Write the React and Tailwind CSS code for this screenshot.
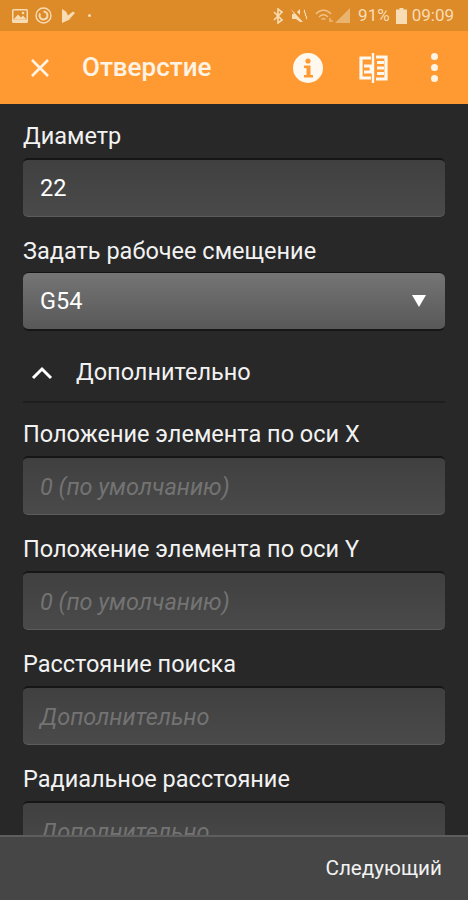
import React from "react";

function Field({ label, value, placeholder, italic }) {
  return (
    <div className="mb-[18px]">
      <div className="h-[32px] text-[23.5px] leading-[32px] text-[#f2f2f2]">{label}</div>
      <div className="mt-[6px] h-[59px] rounded-[5px] border-t-2 border-[#161616] border-b border-b-[#5c5c5c] bg-gradient-to-b from-[#404040] to-[#4a4a4a] px-[17px] flex items-center overflow-hidden">
        {value ? (
          <span className="pt-[2px] text-[23.5px] text-white">{value}</span>
        ) : (
          <span className={`pt-[4px] text-[23.5px] text-[#737373] ${italic ? "italic" : ""}`}>{placeholder}</span>
        )}
      </div>
    </div>
  );
}

function StatusBar() {
  return (
    <div className="h-[31px] bg-[#dd8a28] flex items-center justify-between pl-[12px] pr-[14px] text-[#f8dcb4]">
      <div className="flex items-center gap-[7px]">
        <svg width="16" height="14" viewBox="0 0 16 14">
          <rect x="0" y="0" width="16" height="14" rx="1.5" fill="#f8dcb4" />
          <rect x="1.5" y="1.5" width="13" height="9" fill="#dd8a28" />
          <path d="M1.5 10.5 6 5.5l3 3 2-2 3.5 4z" fill="#f8dcb4" />
          <circle cx="11" cy="4" r="1.3" fill="#f8dcb4" />
        </svg>
        <svg width="17" height="17" viewBox="0 0 17 17" fill="none" stroke="#f8dcb4">
          <circle cx="8.5" cy="8.5" r="7.5" strokeWidth="1.4" />
          <path d="M8.5 4.5a4 4 0 1 1-3.4 1.9" strokeWidth="2" />
        </svg>
        <svg width="14" height="14" viewBox="0 0 14 14" className="ml-[3px]">
          <path d="M0 0l4 2.500 2 4 5-4 2 1.500-6 6.500 4-1.500-11 5z" fill="#f8dcb4" />
        </svg>
        <div className="ml-[5px] w-[3px] h-[3px] rounded-full bg-[#f8dcb4]" />
      </div>
      <div className="flex items-center">
        <svg width="10" height="16" viewBox="0 0 10 16" fill="none" stroke="#f8dcb4" strokeWidth="1.6" className="mr-[7px]">
          <path d="M1 4l8 8-4 3V1l4 3-8 8" />
        </svg>
        <svg width="18" height="16" viewBox="0 0 18 16" className="mr-[7px]">
          <path d="M1 1l12 13-3 0-4-3H2V6h2z" fill="#f8dcb4" />
          <path d="M7 4l3-3v6z" fill="#f8dcb4" />
          <path d="M14 2c2 1-1 2 1 3s-1 2 1 3-1 2 1 3" fill="none" stroke="#f8dcb4" strokeWidth="1.2" />
        </svg>
        <svg width="19" height="14" viewBox="0 0 19 14" fill="none" stroke="#f8dcb4" strokeOpacity="0.7" strokeWidth="1.3" className="mr-[1px]">
          <path d="M1 5c4-5 11-5 15 0" />
          <path d="M4 8c3-3 6-3 9 0" />
          <path d="M6.5 10.5c1.500-1.200 2.500-1.200 4 0" />
          <path d="M15 9v4M17 11v2" />
        </svg>
        <svg width="16" height="16" viewBox="0 0 16 16" className="mr-[7px]">
          <path d="M15 0v15H0z" fill="#f8dcb4" fillOpacity="0.5" />
        </svg>
        <span className="text-[17px] leading-none text-[#f8dcb4] mr-[6px]">91%</span>
        <svg width="11" height="16" viewBox="0 0 11 16" className="mr-[5px]">
          <path d="M3.500 0h4v1.500H11V16H0V1.500h3.500z" fill="#f8dcb4" />
        </svg>
        <span className="text-[17px] leading-none text-[#f8dcb4]">09:09</span>
      </div>
    </div>
  );
}

function Toolbar() {
  return (
    <div className="h-[73px] bg-[#ff9a33] flex items-center text-[#fff4e4]">
      <svg width="18" height="18" viewBox="0 0 18 18" className="ml-[31px]" stroke="#fff4e4" strokeWidth="2.6">
        <path d="M1 1l16 16M17 1L1 17" />
      </svg>
      <span className="ml-[33px] text-[26px] font-medium">Отверстие</span>
      <svg width="30" height="30" viewBox="0 0 30 30" className="ml-auto">
        <circle cx="15" cy="15" r="15" fill="#fff8ee" />
        <circle cx="15" cy="8" r="2.600" fill="#ff9a33" />
        <path d="M11 12.500h6.500V22H20v2.500h-9V22h2.500v-7H11z" fill="#ff9a33" />
      </svg>
      <svg width="29" height="32" viewBox="0 0 29 32" className="ml-[36px]" fill="none" stroke="#fff8ee" strokeWidth="3.200">
        <path d="M12 6H2v20h10" />
        <path d="M14 1v30" strokeWidth="2.400" />
        <path d="M17 5h10v22H17" />
        <path d="M5 14h7v6H5M18 10.500h7M18 16h7M18 21.500h7" strokeWidth="2.800" />
      </svg>
      <div className="ml-[43px] mr-[30px] flex flex-col gap-[4px]">
        <div className="w-[7px] h-[7px] rounded-full bg-[#fff4e4]" />
        <div className="w-[7px] h-[7px] rounded-full bg-[#fff4e4]" />
        <div className="w-[7px] h-[7px] rounded-full bg-[#fff4e4]" />
      </div>
    </div>
  );
}

export default function App() {
  return (
    <div className="w-[468px] h-[900px] flex flex-col overflow-hidden bg-[#282828] font-['Roboto',sans-serif]">
      <StatusBar />
      <Toolbar />
      <div className="flex-1 overflow-hidden px-[23px] pt-[16px]">
        <Field label="Диаметр" value="22" />

        <div className="h-[32px] text-[23.5px] leading-[32px] text-[#f2f2f2]">Задать рабочее смещение</div>
        <div className="mt-[5px] h-[59px] rounded-[6px] border-b-2 border-[#161616] border-t border-t-[#141414] bg-gradient-to-b from-[#757575] to-[#585858] pl-[17px] pr-[19px] flex items-center justify-between">
          <span className="pt-[2px] text-[23.5px] text-white">G54</span>
          <svg width="14" height="14" viewBox="0 0 14 14">
            <path d="M0 1h14L7 13z" fill="#ffffff" />
          </svg>
        </div>

        <div className="mt-[13px] h-[59px] flex items-center border-b-2 border-[#1e1e1e]">
          <svg width="22" height="14" viewBox="0 0 22 14" className="ml-[8px]" fill="none" stroke="#ffffff" strokeWidth="3">
            <path d="M2 12l9-9 9 9" />
          </svg>
          <span className="ml-[23px] text-[23.5px] text-[#f2f2f2]">Дополнительно</span>
        </div>

        <div className="mt-[15px]">
          <Field label="Положение элемента по оси X" placeholder="0 (по умолчанию)" italic />
          <Field label="Положение элемента по оси Y" placeholder="0 (по умолчанию)" italic />
          <Field label="Расстояние поиска" placeholder="Дополнительно" italic />
          <Field label="Радиальное расстояние" placeholder="Дополнительно" italic />
        </div>
      </div>
      <div className="h-[65px] bg-[#464646] border-t-2 border-[#5e5e5e] flex items-center justify-end pr-[26px]">
        <span className="text-[20.7px] text-[#f2f2f2]">Следующий</span>
      </div>
    </div>
  );
}
